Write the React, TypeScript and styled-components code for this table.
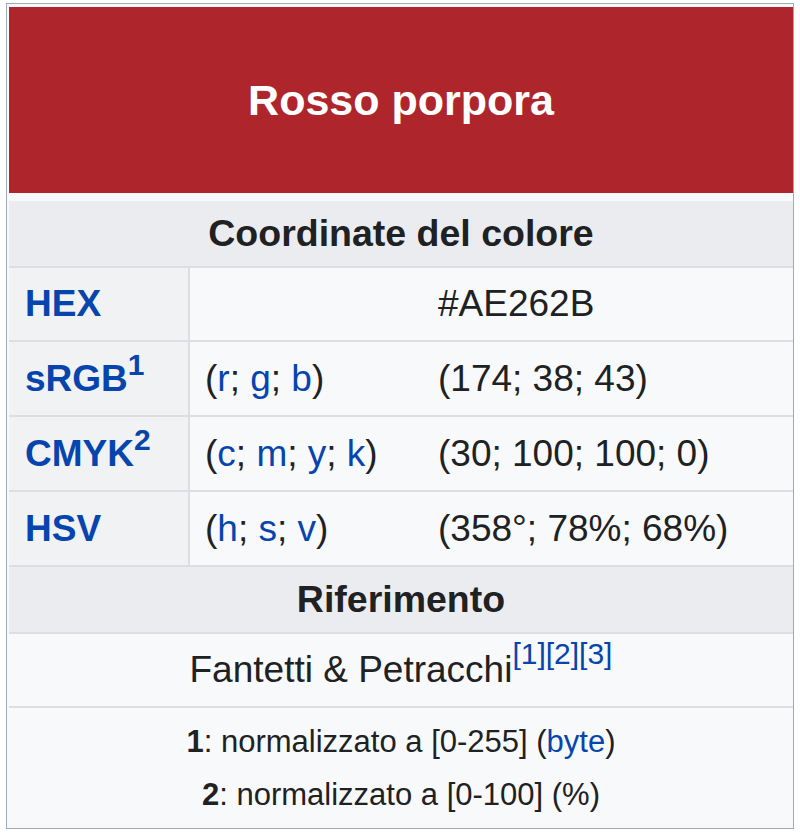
import React from "react";
import styled, { createGlobalStyle } from "styled-components";

const Global = createGlobalStyle`
  html, body { margin: 0; padding: 0; background: #ffffff; }
  body { font-family: "Liberation Sans", Arial, sans-serif; color: #202122; }
`;

const Page = styled.div`
  padding: 3px 6px 0 6px;
`;

const Box = styled.div`
  width: 788px;
  box-sizing: border-box;
  border: 1px solid #a2a9b1;
  background: #f8f9fa;
  padding: 3px 0 1px 2px;
`;

const Title = styled.div`
  height: 186px;
  background: #ae262b;
  color: #ffffff;
  font-weight: bold;
  font-size: 43px;
  display: flex;
  align-items: center;
  justify-content: center;
  margin-bottom: 8px;
`;

const Grid = styled.div`
  display: grid;
  grid-template-columns: 179px 1fr;
  gap: 2px;
  background: #dcdee2;
`;

const Header = styled.div<{ $h: number }>`
  grid-column: 1 / -1;
  height: ${(p) => p.$h}px;
  background: #eaecf0;
  font-weight: bold;
  font-size: 37.5px;
  display: flex;
  align-items: center;
  justify-content: center;
  color: #202122;
`;

const Label = styled.div<{ $h: number }>`
  height: ${(p) => p.$h}px;
  background: #f1f2f3;
  display: flex;
  align-items: center;
  padding-left: 16px;
  font-weight: bold;
  font-size: 37px;
  color: #0645ad;
  box-sizing: border-box;
`;

const Value = styled.div`
  background: #f8f9fa;
  display: grid;
  grid-template-columns: 233px 1fr;
  align-items: center;
  padding-left: 15px;
  font-size: 37px;
  color: #202122;
`;

const Link = styled.span`
  color: #0645ad;
`;

const Sup = styled.sup`
  font-size: 30px;
  line-height: 0;
  vertical-align: 0.55em;
`;

const Wide = styled.div<{ $h: number }>`
  grid-column: 1 / -1;
  height: ${(p) => p.$h}px;
  background: #f8f9fa;
  display: flex;
  flex-direction: column;
  align-items: center;
  justify-content: center;
  font-size: 37px;
`;

const Refs = styled.sup`
  font-size: 30px;
  line-height: 0;
  vertical-align: 0.6em;
  color: #0645ad;
`;

const Note = styled.div`
  font-size: 31px;
  line-height: 53px;
`;

const Vars = ({ items }: { items: string[] }) => (
  <span>
    (
    {items.map((it, i) => (
      <React.Fragment key={it}>
        <Link>{it}</Link>
        {i < items.length - 1 ? "; " : ""}
      </React.Fragment>
    ))}
    )
  </span>
);

export default function App() {
  return (
    <>
      <Global />
      <Page>
        <Box>
          <Title>Rosso porpora</Title>
          <Grid>
            <Header $h={65}>Coordinate del colore</Header>

            <Label $h={72}>HEX</Label>
            <Value>
              <span />
              <span>#AE262B</span>
            </Value>

            <Label $h={73}>
              <span>
                sRGB<Sup>1</Sup>
              </span>
            </Label>
            <Value>
              <Vars items={["r", "g", "b"]} />
              <span>(174; 38; 43)</span>
            </Value>

            <Label $h={73}>
              <span>
                CMYK<Sup>2</Sup>
              </span>
            </Label>
            <Value>
              <Vars items={["c", "m", "y", "k"]} />
              <span>(30; 100; 100; 0)</span>
            </Value>

            <Label $h={73}>HSV</Label>
            <Value>
              <Vars items={["h", "s", "v"]} />
              <span>(358°; 78%; 68%)</span>
            </Value>

            <Header $h={65}>Riferimento</Header>

            <Wide $h={72}>
              <span>
                Fantetti &amp; Petracchi<Refs>[1][2][3]</Refs>
              </span>
            </Wide>

            <Wide $h={119}>
              <Note>
                <b>1</b>: normalizzato a [0-255] (<Link>byte</Link>)
              </Note>
              <Note>
                <b>2</b>: normalizzato a [0-100] (%)
              </Note>
            </Wide>
          </Grid>
        </Box>
      </Page>
    </>
  );
}
